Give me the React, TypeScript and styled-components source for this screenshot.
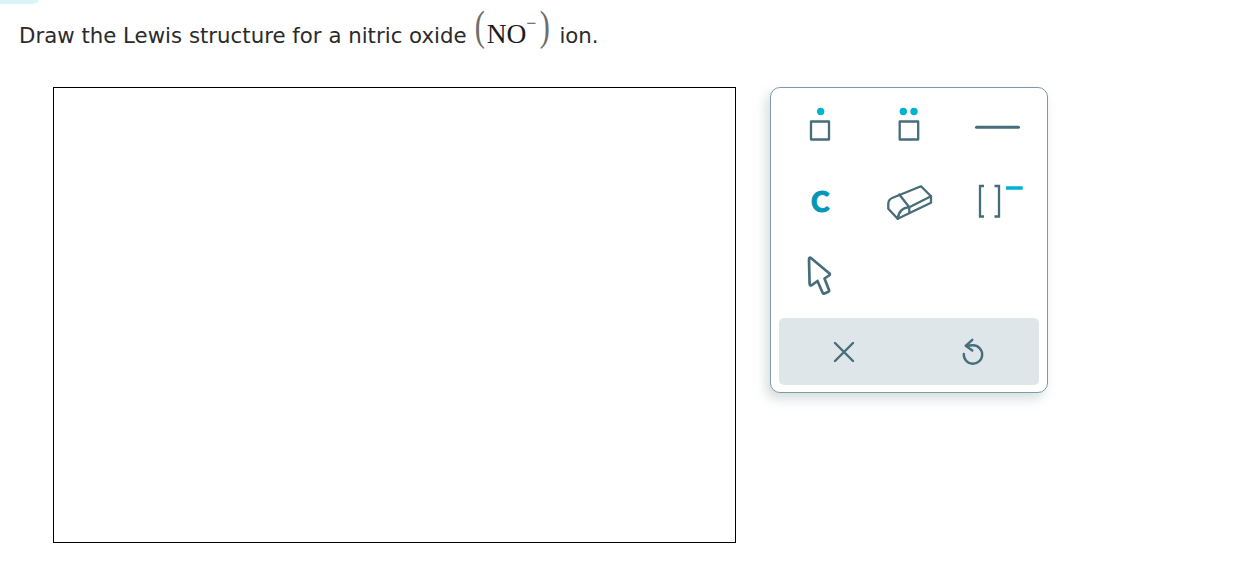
// Lewis structure question with drawing canvas and tool panel

import styled, { createGlobalStyle } from "styled-components";

const GlobalStyle = createGlobalStyle`
  html, body {
    margin: 0;
    padding: 0;
    background: #fff;
  }
  body {
    font-family: "DejaVu Sans", Verdana, sans-serif;
  }
`;

const Page = styled.div`
  width: 1253px;
  height: 587px;
  overflow: hidden;
`;

// 왼쪽 위 모서리 장식
const CornerTab = styled.div`
  width: 39px;
  height: 4px;
  background: #d9f4f7;
  border-bottom-right-radius: 9px 4px;
`;

const Question = styled.p`
  display: flex;
  align-items: baseline;
  height: 50px;
  margin: 0;
  padding: 3px 0 5px 19px;
  font-size: 21.3px;
  line-height: 44px;
  color: #2b2b2b;
  white-space: pre;
`;

const Formula = styled.span`
  display: inline-flex;
  align-items: baseline;
  margin: 0 9px 0 8px;
  font-family: "Liberation Serif", serif;
  font-size: 27.5px;
  color: #1c1c1c;
`;

const Paren = styled.span<{ $shift: number }>`
  display: inline-block;
  width: 12px;
  font-size: 42px;
  line-height: 44px;
  color: #6e6e6e;
  text-align: center;
  transform: translate(${(p) => p.$shift}px, -3px) scaleX(0.72);
`;

const Minus = styled.sup`
  width: 12px;
  font-size: 18px;
  line-height: 0;
  color: #555;
  text-align: center;
  transform: translate(-1px, -14px);
`;

const Workspace = styled.div`
  display: flex;
  align-items: flex-start;
  gap: 34px;
  padding: 25px 0 0 53px;
`;

const Canvas = styled.div`
  width: 683px;
  height: 456px;
  box-sizing: border-box;
  border: 1px solid #000;
  background: #fff;
`;

const Panel = styled.div`
  width: 278px;
  height: 306px;
  box-sizing: border-box;
  border: 1px solid #7f9ca4;
  border-radius: 10px;
  background: #fff;
  box-shadow: -4px 6px 12px rgba(70, 100, 110, 0.22);
`;

const ToolGrid = styled.div`
  display: grid;
  grid-template-columns: repeat(3, 1fr);
  grid-auto-rows: 75px;
  padding: 0 5px;
`;

const ToolCell = styled.button`
  display: flex;
  align-items: center;
  justify-content: center;
  padding: 0;
  border: none;
  background: none;
`;

const Icon = styled.svg`
  width: 48px;
  height: 48px;
  overflow: visible;
  fill: none;
  stroke: #466d7a;
  stroke-width: 2.3;
  stroke-linecap: round;
  stroke-linejoin: round;
`;

const CarbonLabel = styled.span`
  font-family: "Lato", sans-serif;
  font-size: 28px;
  font-weight: 900;
  line-height: 1;
  color: #0097b8;
  -webkit-text-stroke: 0.9px #0097b8;
`;

const Footer = styled.div`
  display: grid;
  grid-template-columns: 1fr 1fr;
  height: 67px;
  margin: 5px 8px 0;
  border-radius: 5px;
  background: #dfe6e9;
`;

const FooterButton = styled.button`
  display: flex;
  align-items: center;
  justify-content: center;
  padding: 0;
  border: none;
  background: none;
`;

const FooterIcon = styled.svg`
  width: 28px;
  height: 28px;
  fill: none;
  stroke: #466d7a;
  stroke-width: 2.4;
  stroke-linecap: round;
  stroke-linejoin: round;
`;

const DOT = "#00b3d1";

export default () => {
  return (
    <Page>
      <GlobalStyle />
      <CornerTab />
      <Question>
        Draw the Lewis structure for a nitric oxide
        <Formula>
          <Paren $shift={-2}>(</Paren>
          NO
          <Minus>−</Minus>
          <Paren $shift={0}>)</Paren>
        </Formula>
        ion.
      </Question>
      <Workspace>
        <Canvas />
        <Panel>
          <ToolGrid>
            {/* 점 하나 */}
            <ToolCell>
              <Icon viewBox="0 0 48 48">
                <rect x="15" y="19.5" width="18" height="18" />
                <circle cx="24.7" cy="9.5" r="3.7" fill={DOT} stroke="none" />
              </Icon>
            </ToolCell>
            {/* 점 두개 */}
            <ToolCell>
              <Icon viewBox="0 0 48 48">
                <rect x="14.7" y="19.5" width="18.5" height="18" />
                <circle cx="18.3" cy="9.5" r="3.7" fill={DOT} stroke="none" />
                <circle cx="29" cy="9.5" r="3.7" fill={DOT} stroke="none" />
              </Icon>
            </ToolCell>
            {/* 결합선 */}
            <ToolCell>
              <Icon viewBox="0 0 48 48">
                <path d="M2.5 25.2H44.5" strokeWidth="3" />
              </Icon>
            </ToolCell>
            <ToolCell>
              <CarbonLabel>C</CarbonLabel>
            </ToolCell>
            {/* 지우개 */}
            <ToolCell>
              <Icon viewBox="0 0 48 48">
                <path d="M36 9.2L46 19.2V25.8L12.7 41.8L3.3 31.8V26.8Q3.3 22.5 7.7 20.8Z" />
                <path d="M14.3 17.5L24.3 30.2L46 19.2M24.3 30.2V36.2M24.3 30.2Q14 31 12.7 41.8" />
              </Icon>
            </ToolCell>
            {/* 전하 괄호 */}
            <ToolCell>
              <Icon viewBox="0 0 48 48">
                <path d="M10 9H6V39.5H10M20.5 9H25V39.5H20.5" strokeLinecap="butt" strokeLinejoin="miter" />
                <path d="M32 11H48.7" stroke={DOT} strokeWidth="3.5" strokeLinecap="butt" />
              </Icon>
            </ToolCell>
            {/* 선택 커서 */}
            <ToolCell>
              <Icon viewBox="0 0 48 48">
                <path
                  d="M13 7.5Q13 4.5 15.5 6.5L33.5 21.5Q34.5 22.5 33 23.5L28.5 26.5L33 38Q33.5 39.5 32 40L28.5 41.5Q27 42 26.5 40.5L21.5 29L16 33Q13.7 34.2 13.6 31.7Z"
                  strokeWidth="2.7"
                />
              </Icon>
            </ToolCell>
          </ToolGrid>
          <Footer>
            <FooterButton>
              <FooterIcon viewBox="0 0 28 28">
                <path d="M5 5L23 23M23 5L5 23" />
              </FooterIcon>
            </FooterButton>
            <FooterButton>
              <FooterIcon viewBox="0 0 28 28">
                <path d="M12.3 1.8L5.7 7.8L12.3 12.5" />
                <path d="M6 7.8C8 7.4 10 7.3 13 7.3A9.2 9.2 0 1 1 3.8 16" />
              </FooterIcon>
            </FooterButton>
          </Footer>
        </Panel>
      </Workspace>
    </Page>
  );
};
